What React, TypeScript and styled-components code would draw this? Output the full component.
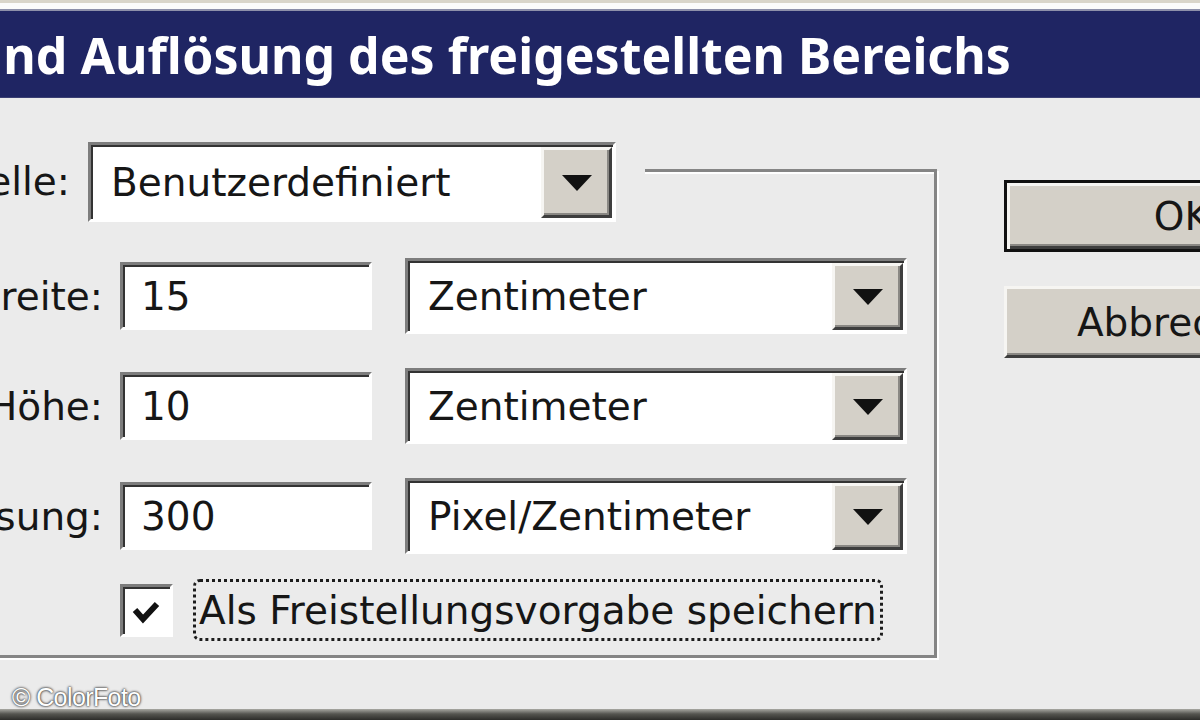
import React from "react";
import styled, { createGlobalStyle } from "styled-components";

const GlobalStyle = createGlobalStyle`
  *, *::before, *::after { box-sizing: border-box; }
  html, body { margin: 0; padding: 0; background: #ebebeb; }
  body { width: 1200px; height: 720px; overflow: hidden; }
`;

const Screen = styled.div`
  width: 1200px;
  height: 720px;
  overflow: hidden;
  display: flex;
  flex-direction: column;
  background: #ebebeb;
  font-family: "DejaVu Sans", Verdana, sans-serif;
  font-size: 39px;
  color: #161616;
`;

// the shot is a zoomed crop, so the dialog's left part lies off screen
const Dialog = styled.div`
  flex: 1;
  min-height: 0;
  width: 1600px;
  margin-left: -200px;
  display: flex;
  flex-direction: column;
`;

const TopEdge = styled.div`
  flex: none;
  height: 11px;
  background: linear-gradient(#d9d5ca 0 3px, #fbfbfb 3px 9px, #8d90aa 9px 11px);
`;

const TitleBar = styled.div`
  flex: none;
  height: 87px;
  padding-left: 4px;
  background: #1f2563;
  border-bottom: 1px solid #3a3f73;
  color: #fff;
  font-family: "Noto Sans", "DejaVu Sans", sans-serif;
  font-weight: 700;
  font-size: 50px;
  line-height: 88px;
  white-space: nowrap;
`;

const Content = styled.div`
  display: flex;
  align-items: flex-start;
`;

const GroupBox = styled.fieldset`
  flex: none;
  width: 1097px;
  min-width: 0;
  margin: 44px 0 0 40px;
  padding: 60px 27px 14px 17px;
  border: 3px solid #858585;
  box-shadow: inset 2px 2px 0 #fff, 2px 2px 0 #fff;
`;

const Legend = styled.legend`
  padding: 0 29px 0 0;
  background: #ebebeb;
`;

const SourceRow = styled.div`
  display: flex;
  align-items: flex-start;
  height: 56px;
`;

const Label = styled.div<{ $width: number }>`
  flex: none;
  width: ${(p) => p.$width}px;
  margin-right: ${(p) => (p.$width > 220 ? 17 : 18)}px;
  text-align: right;
  white-space: nowrap;
  align-self: center;
`;

const SourceLabel = styled(Label)`
  align-self: flex-start;
  line-height: 80px;
`;

const FieldRow = styled.div`
  display: flex;
  align-items: center;
  height: 76px;

  & + & {
    margin-top: 34px;
  }
`;

const Sunken = styled.div`
  flex: none;
  display: flex;
  background: #fff;
  border: 3px solid;
  border-color: #7d7d7d #fff #fff #7d7d7d;
  box-shadow: inset 2px 2px 0 #333;
`;

const TextField = styled(Sunken)`
  width: 252px;
  height: 68px;
  align-items: center;
  padding-left: 18px;
`;

const Combo = styled(Sunken)<{ $width: number; $height: number }>`
  width: ${(p) => p.$width}px;
  height: ${(p) => p.$height}px;
  margin-left: ${(p) => (p.$height > 78 ? 0 : 33)}px;
  padding: 2px 1px 1px 2px;
`;

const ComboValue = styled.div`
  flex: 1;
  display: flex;
  align-items: center;
  padding-left: 18px;
  white-space: nowrap;
`;

const DropButton = styled.div`
  flex: none;
  width: 71px;
  display: flex;
  align-items: center;
  justify-content: center;
  background: #d4d0c8;
  border: 3px solid;
  border-color: #f6f5f2 #3e3e3e #3e3e3e #f6f5f2;
  box-shadow: inset -2px -2px 0 #8a8884;
`;

const CheckRow = styled.div`
  display: flex;
  align-items: center;
  height: 62px;
  margin-top: 25px;
  padding-left: 260px;
`;

const CheckBox = styled(Sunken)`
  width: 53px;
  height: 53px;
  align-items: center;
  justify-content: center;
  padding: 3px 3px 0 1px;
`;

const FocusLabel = styled.div`
  height: 62px;
  margin-left: 20px;
  padding: 0 3px;
  display: flex;
  align-items: center;
  border: 3px dotted #1c1c1c;
  border-radius: 7px;
  white-space: nowrap;
`;

const ButtonColumn = styled.div`
  flex: none;
  display: flex;
  flex-direction: column;
  gap: 34px;
  margin: 82px 0 0 67px;
`;

const DialogButton = styled.div<{ $default?: boolean }>`
  width: 356px;
  height: 72px;
  display: flex;
  align-items: center;
  justify-content: center;
  background: #d4d0c8;
  border: 3px solid;
  ${(p) =>
    p.$default
      ? `border-color: #111;
         box-shadow: inset 3px 3px 0 #f6f5f2, inset -3px -3px 0 #3e3e3e, inset -5px -5px 0 #8a8884;`
      : `border-color: #f6f5f2 #3e3e3e #3e3e3e #f6f5f2;
         box-shadow: inset -2px -2px 0 #8a8884;`}
`;

const Footer = styled.div`
  flex: none;
  display: flex;
  flex-direction: column;
`;

const Watermark = styled.div`
  height: 30px;
  padding-left: 12px;
  font-family: "Liberation Sans", Arial, sans-serif;
  font-size: 25px;
  letter-spacing: -0.6px;
  line-height: 36px;
  color: #fff;
  text-shadow: 0 0 2px #222, 0 0 3px #444;
`;

const BottomBar = styled.div`
  height: 11px;
  background: linear-gradient(#a9a9a3, #555550 45%, #2d2d2a);
`;

const Arrow = () => (
  <svg width="30" height="16" viewBox="0 0 30 16">
    <polygon points="0,0 30,0 15,16" fill="#111" />
  </svg>
);

const CheckMark = () => (
  <svg width="28" height="24" viewBox="0 0 28 24">
    <polyline points="3,10 11,19 25,4" fill="none" stroke="#111" strokeWidth="6" />
  </svg>
);

const fields = [
  { label: "Breite:", value: "15", unit: "Zentimeter" },
  { label: "Höhe:", value: "10", unit: "Zentimeter" },
  { label: "Auflösung:", value: "300", unit: "Pixel/Zentimeter" },
];

const App: React.FC = () => {
  return (
    <>
      <GlobalStyle />
      <Screen>
        <Dialog>
          <TopEdge />
          <TitleBar>Größe und Auflösung des freigestellten Bereichs</TitleBar>
          <Content>
            <GroupBox>
              <Legend>
                <SourceRow>
                  <SourceLabel $width={210}>Quelle:</SourceLabel>
                  <Combo $width={528} $height={80}>
                    <ComboValue>Benutzerdefiniert</ComboValue>
                    <DropButton>
                      <Arrow />
                    </DropButton>
                  </Combo>
                </SourceRow>
              </Legend>
              {fields.map((f) => (
                <FieldRow key={f.label}>
                  <Label $width={243}>{f.label}</Label>
                  <TextField>{f.value}</TextField>
                  <Combo $width={502} $height={76}>
                    <ComboValue>{f.unit}</ComboValue>
                    <DropButton>
                      <Arrow />
                    </DropButton>
                  </Combo>
                </FieldRow>
              ))}
              <CheckRow>
                <CheckBox>
                  <CheckMark />
                </CheckBox>
                <FocusLabel>Als Freistellungsvorgabe speichern</FocusLabel>
              </CheckRow>
            </GroupBox>
            <ButtonColumn>
              <DialogButton $default>OK</DialogButton>
              <DialogButton>Abbrechen</DialogButton>
            </ButtonColumn>
          </Content>
        </Dialog>
        <Footer>
          <Watermark>© ColorFoto</Watermark>
          <BottomBar />
        </Footer>
      </Screen>
    </>
  );
};

export default App;
